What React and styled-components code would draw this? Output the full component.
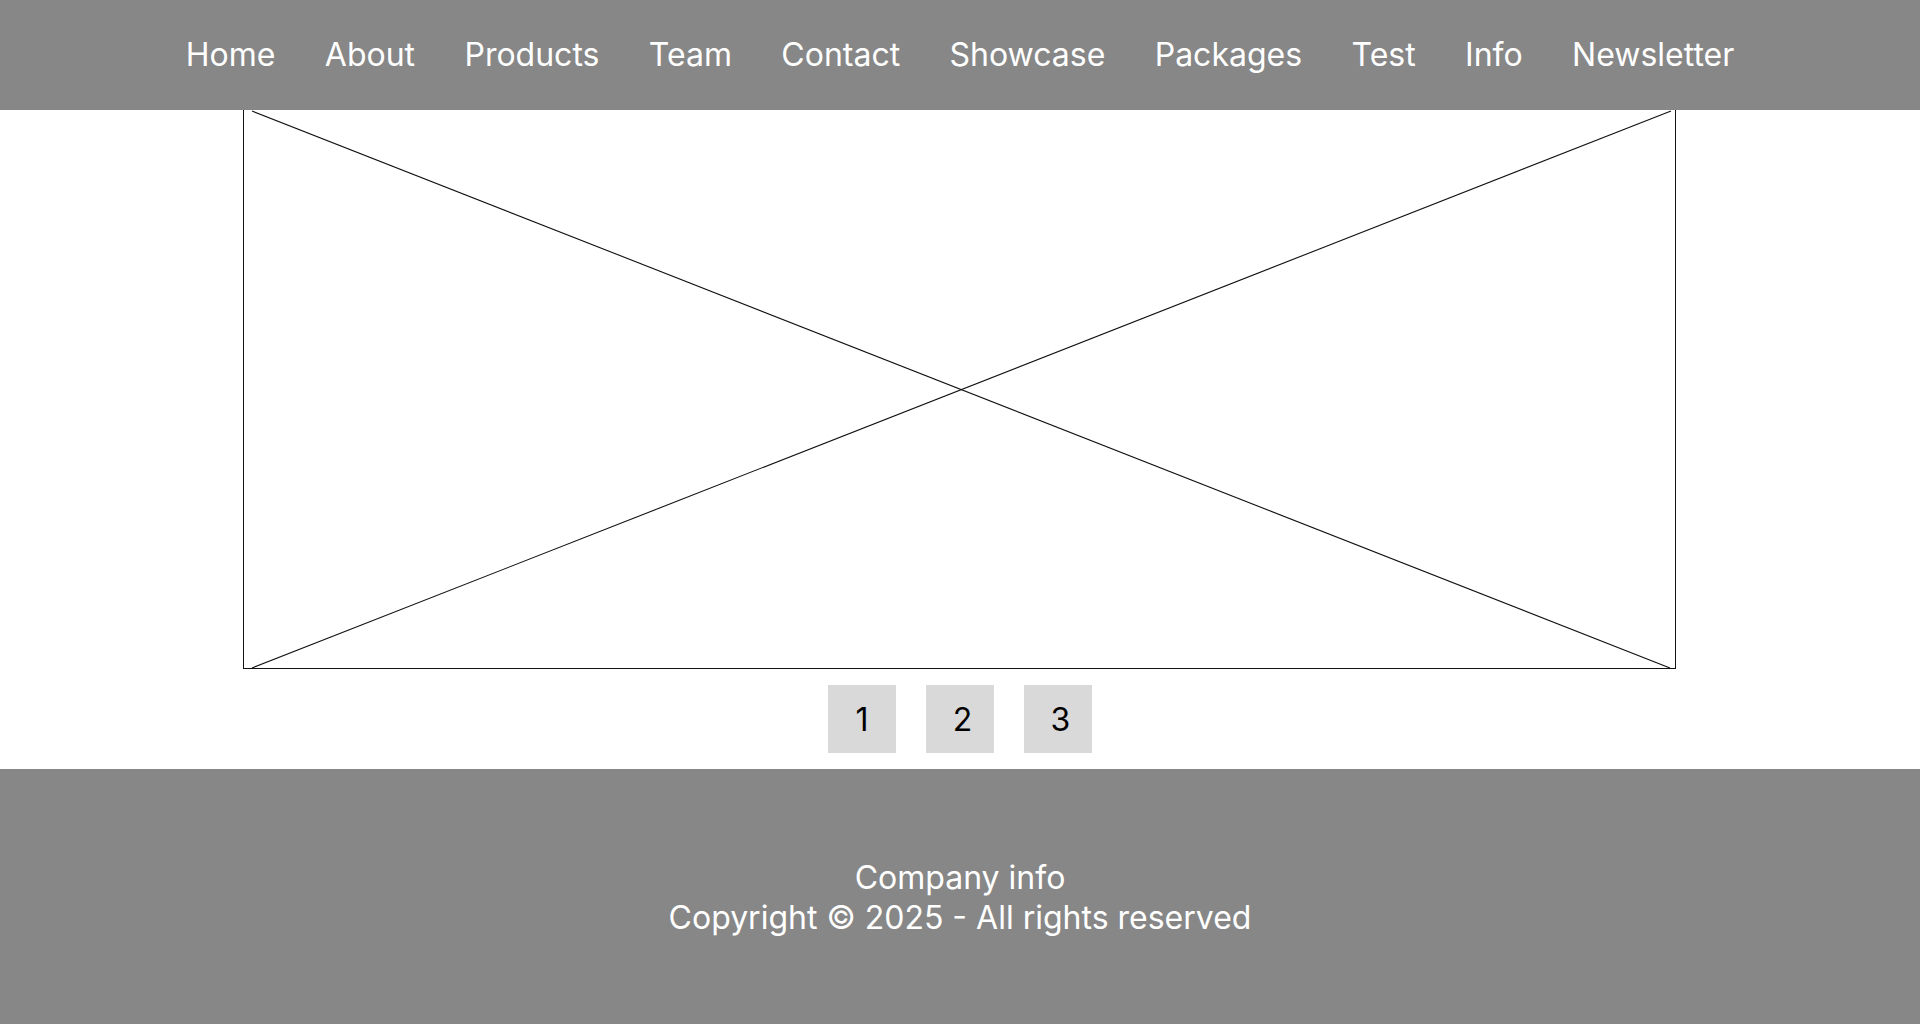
import React from "react";
import styled, { createGlobalStyle } from "styled-components";

const NAV_ITEMS = ["Home", "About", "Products", "Team", "Contact", "Showcase", "Packages", "Test", "Info", "Newsletter"];
const PAGES = ["1", "2", "3"];

const App = () => {
  return (
    <>
      <GlobalStyle />
      <StPage>
        <StNav>
          {NAV_ITEMS.map((item) => (
            <StNavLink key={item} href="#">
              {item}
            </StNavLink>
          ))}
        </StNav>
        <StMain>
          <StPlaceholder>
            {/* 이미지 자리 표시 */}
            <svg width="100%" height="100%" viewBox="0 0 1431 558" preserveAspectRatio="none">
              <line x1="8" y1="1" x2="1426" y2="558" stroke="#111" strokeWidth="1.1" />
              <line x1="1427" y1="1" x2="8" y2="558" stroke="#111" strokeWidth="1.1" />
            </svg>
          </StPlaceholder>
          <StPager>
            {PAGES.map((p, i) => (
              <StPageBtn key={p} type="button" $nudge={i > 0}>
                {p}
              </StPageBtn>
            ))}
          </StPager>
        </StMain>
        <StFooter>
          <p>Company info</p>
          <p>Copyright © 2025 - All rights reserved</p>
        </StFooter>
      </StPage>
    </>
  );
};

export default App;

const GlobalStyle = createGlobalStyle`
  html, body {
    margin: 0;
    padding: 0;
    background: #ffffff;
    font-family: Inter, "Liberation Sans", sans-serif;
  }
  * {
    box-sizing: border-box;
  }
`;

const StPage = styled.div`
  width: 1920px;
  height: 1024px;
  display: flex;
  flex-direction: column;
`;

const StNav = styled.nav`
  height: 110px;
  background-color: #878787;
  display: flex;
  justify-content: center;
  align-items: center;
  gap: 49.4px;
`;

const StNavLink = styled.a`
  color: #ffffff;
  font-size: 32px;
  text-decoration: none;
  line-height: 1;
`;

const StMain = styled.main`
  display: flex;
  flex-direction: column;
  align-items: center;
`;

const StPlaceholder = styled.div`
  width: 1433px;
  height: 559px;
  border: 1px solid #111;
  border-top: none;
  margin-left: -1px;
  & > svg {
    display: block;
  }
`;

const StPager = styled.div`
  display: flex;
  gap: 30px;
  padding: 16px 0;
`;

const StPageBtn = styled.button`
  width: 68px;
  height: 68px;
  border: none;
  background-color: #d9d9d9;
  color: #000000;
  font-family: Inter, "Liberation Sans", sans-serif;
  font-size: 32px;
  padding: 0 0 0 ${(props) => (props.$nudge ? "5px" : "0")};
  cursor: pointer;
`;

const StFooter = styled.footer`
  flex: 1;
  background-color: #878787;
  color: #ffffff;
  display: flex;
  flex-direction: column;
  justify-content: center;
  align-items: center;
  font-size: 32px;
  line-height: 40px;
  padding-top: 2px;
  & > p {
    margin: 0;
  }
`;
